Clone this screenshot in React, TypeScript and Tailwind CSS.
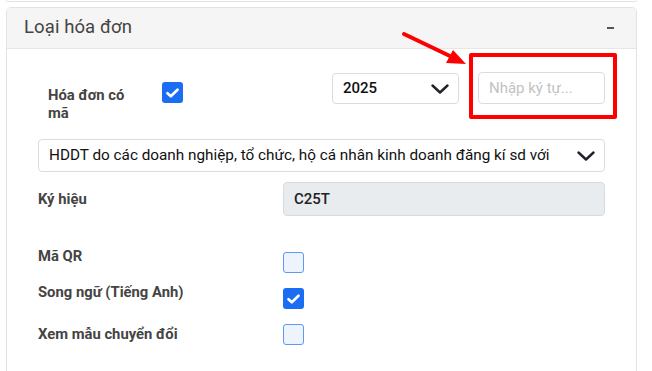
import React from 'react'

const font = { fontFamily: 'Roboto, "Noto Sans", "Liberation Sans", sans-serif' }

function Chevron() {
  return (
    <svg width="18" height="10" viewBox="0 0 18 10" fill="none">
      <path d="M1.5 1.5 L9 8.5 L16.5 1.5" stroke="#1f2328" strokeWidth="2.4" strokeLinecap="round" strokeLinejoin="round" />
    </svg>
  )
}

function Check({ checked }: { checked: boolean }) {
  if (!checked) {
    return <div className="w-[21px] h-[21px] rounded-[3px] border border-[#5b9bf3] bg-[#eef4fe]" />
  }
  return (
    <div className="w-[21px] h-[21px] rounded-[3px] bg-[#1b6ef3] flex items-center justify-center">
      <svg width="13" height="10" viewBox="0 0 13 10" fill="none">
        <path d="M1.5 5.2 L4.8 8.3 L11.5 1.7" stroke="white" strokeWidth="2.6" strokeLinecap="round" strokeLinejoin="round" />
      </svg>
    </div>
  )
}

export default function App() {
  return (
    <div className="relative w-[652px] h-[371px] overflow-hidden bg-white" style={font}>
      {/* previous card edge */}
      <div className="ml-[6px] w-[631px] h-[2px] border-x border-b border-[#e3e3e3] rounded-b-[4px]" />

      <div className="mt-[5px] ml-[6px] w-[631px] h-[400px] border border-[#e3e3e3] rounded-t-[5px]">
        {/* header */}
        <div className="h-[41px] bg-[#f5f5f5] border-b border-[#e6e6e6] rounded-t-[5px] flex items-center justify-between pl-[17px] pr-[22px]">
          <span className="text-[18.5px] text-[#444] tracking-[0.1px]">Loại hóa đơn</span>
          <span className="w-[7px] h-[2px] bg-[#555]" />
        </div>

        {/* body */}
        <div className="px-[31px] pt-[23px]">
          <div className="flex items-start h-[52px]">
            <div className="pl-[10px] w-[92px] mt-[14px] text-[14.8px] leading-[18px] font-bold text-[#444]">
              Hóa đơn có mã
            </div>
            <div className="ml-[32px] mt-[10px]">
              <Check checked />
            </div>
            <div className="ml-auto mt-[1px] w-[127px] h-[31px] border border-[#dcdcdc] rounded-[4px] flex items-center justify-between pl-[10px] pr-[9px]">
              <span className="text-[15px] font-medium text-[#111]">2025</span>
              <Chevron />
            </div>
            <div className="ml-[19px] w-[127px] h-[32px] border border-[#dcdcdc] rounded-[4px] flex items-center pl-[10px]">
              <span className="text-[15px] text-[#c2c2c2]">Nhập ký tự...</span>
            </div>
          </div>

          <div className="mt-[15px] h-[33px] border border-[#dcdcdc] rounded-[4px] flex items-center justify-between pl-[10px] pr-[9px]">
            <span className="text-[15.3px] text-[#111] whitespace-nowrap">
              HDDT do các doanh nghiệp, tổ chức, hộ cá nhân kinh doanh đăng kí sd với
            </span>
            <Chevron />
          </div>

          <div className="mt-[10px] flex items-center h-[34px]">
            <div className="w-[245px] text-[14.8px] font-bold text-[#444]">Ký hiệu</div>
            <div className="flex-1 h-[34px] bg-[#e9ecef] border border-[#d8dadd] rounded-[4px] flex items-center pl-[10px]">
              <span className="text-[15px] font-medium text-[#222]">C25T</span>
            </div>
          </div>

          <div className="mt-[30px] flex items-start h-[36px]">
            <div className="w-[245px] text-[14.8px] leading-[20px] font-bold text-[#444]">Mã QR</div>
            <div className="mt-[6px]">
              <Check checked={false} />
            </div>
          </div>
          <div className="flex items-start h-[37px]">
            <div className="w-[245px] text-[14.8px] leading-[20px] font-bold text-[#444]">Song ngữ (Tiếng Anh)</div>
            <div className="mt-[6px]">
              <Check checked />
            </div>
          </div>
          <div className="flex items-start h-[36px]">
            <div className="w-[245px] mt-[5px] text-[14.8px] leading-[20px] font-bold text-[#444]">Xem mẫu chuyển đổi</div>
            <div className="mt-[5px]">
              <Check checked={false} />
            </div>
          </div>
        </div>
      </div>

      {/* annotation */}
      <div className="absolute left-[469px] top-[53px] w-[148px] h-[66px] border-4 border-[#ff0000] rounded-[2px]" />
      <svg className="absolute left-0 top-0" width="652" height="371" viewBox="0 0 652 371">
        <line x1="404" y1="34" x2="452" y2="57" stroke="#ff0000" strokeWidth="4" strokeLinecap="round" />
        <polygon points="466,64 446,63 453,50" fill="#ff0000" />
      </svg>
    </div>
  )
}
